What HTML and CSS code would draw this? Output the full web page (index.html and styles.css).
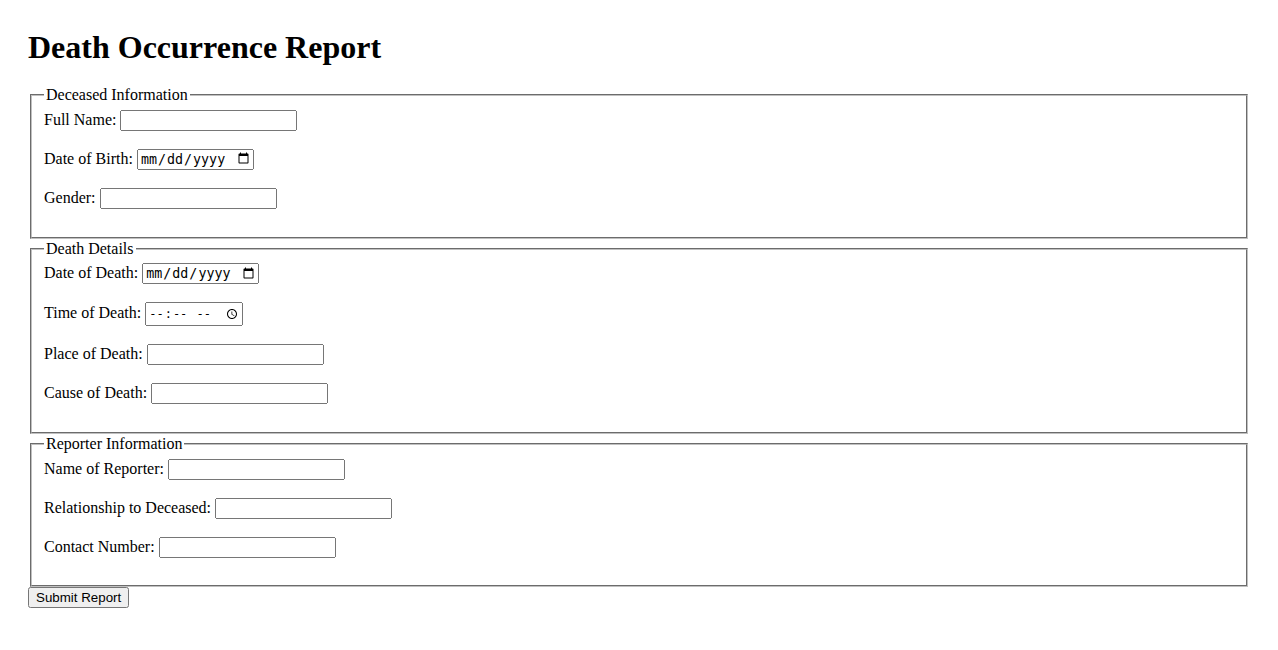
FILE: index.html
```html
<!DOCTYPE html>
<html lang="en">
<head>
<meta charset="utf-8">
<title>Death Occurrence Report</title>
<link rel="stylesheet" href="styles.css">
</head>
<body class="page">
<h1 class="title">Death Occurrence Report</h1>
<form class="report-form">
  <fieldset class="group">
    <legend class="group-legend">Deceased Information</legend>
    <label class="field-label" for="fullName">Full Name:</label>
    <input class="field-input" type="text" id="fullName" name="fullName"><br><br>
    <label class="field-label" for="dob">Date of Birth:</label>
    <input class="field-input date-input" type="date" id="dob" name="dob"><br><br>
    <label class="field-label" for="gender">Gender:</label>
    <input class="field-input" type="text" id="gender" name="gender"><br><br>
  </fieldset>
  <fieldset class="group">
    <legend class="group-legend">Death Details</legend>
    <label class="field-label" for="dod">Date of Death:</label>
    <input class="field-input date-input" type="date" id="dod" name="dod"><br><br>
    <label class="field-label" for="tod">Time of Death:</label>
    <input class="field-input time-input" type="time" id="tod" name="tod"><br><br>
    <label class="field-label" for="pod">Place of Death:</label>
    <input class="field-input" type="text" id="pod" name="pod"><br><br>
    <label class="field-label" for="cod">Cause of Death:</label>
    <input class="field-input" type="text" id="cod" name="cod"><br><br>
  </fieldset>
  <fieldset class="group group-last">
    <legend class="group-legend">Reporter Information</legend>
    <label class="field-label" for="reporter">Name of Reporter:</label>
    <input class="field-input" type="text" id="reporter" name="reporter"><br><br>
    <label class="field-label" for="relation">Relationship to Deceased:</label>
    <input class="field-input" type="text" id="relation" name="relation"><br><br>
    <label class="field-label" for="contact">Contact Number:</label>
    <input class="field-input" type="tel" id="contact" name="contact"><br><br>
  </fieldset>
  <button class="submit-btn" type="submit">Submit Report</button>
</form>
</body>
</html>
```

FILE: styles.css
```css
.page {
  margin: 8px 28px;
  font-family: "Liberation Serif", "Times New Roman", serif;
  font-size: 16px;
  color: #000;
  background: #fff;
}

.title {
  font-size: 2em;
  font-weight: bold;
  margin: 0.67em 0 19.5px;
}

.group {
  margin: 0 2px;
  padding: 0.35em 0.75em 0.625em;
  border: 2px groove #c0c0c0;
}

.group + .group {
  margin-top: 1px;
}

.group-last {
  padding-bottom: 9px;
}

.group-legend {
  padding: 0 2px;
}

.field-input {
  box-sizing: border-box;
  width: 177px;
  height: 21px;
}

.date-input {
  width: 117px;
}

.time-input {
  width: 98px;
  height: 24px;
  font-size: 12px;
}

.submit-btn {
  font-family: "Liberation Sans", Arial, sans-serif;
  font-size: 13.333px;
}
```
